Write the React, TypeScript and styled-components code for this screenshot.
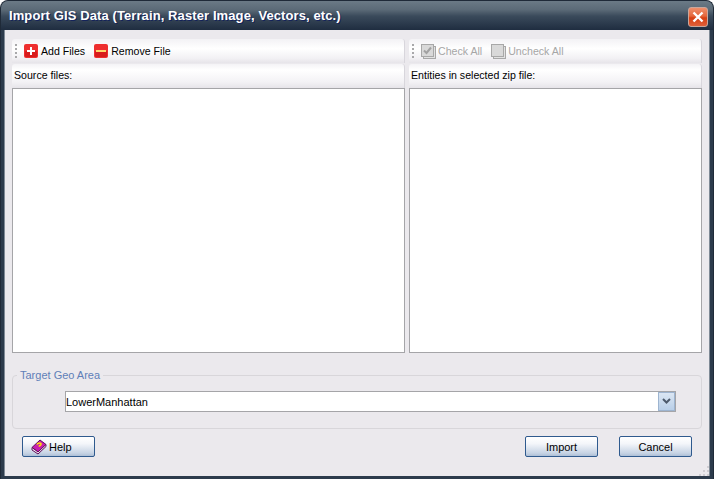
import React from 'react';
import styled, { createGlobalStyle } from 'styled-components';

const GlobalStyle = createGlobalStyle`
  html, body {
    margin: 0;
    padding: 0;
    background: #ffffff;
    overflow: hidden;
  }
  * {
    box-sizing: border-box;
  }
`;

const Window = styled.div`
  width: 714px;
  height: 479px;
  display: flex;
  flex-direction: column;
  background: #2c3b4c;
  border: 1px solid #1f2a38;
  border-bottom: 0;
  border-radius: 8px 8px 0 0;
  padding: 0 3px 3px;
  font-family: "Liberation Sans", Arial, sans-serif;
  font-size: 11px;
  color: #000;
`;

const TitleBar = styled.div`
  flex: none;
  height: 29px;
  margin: 0 -3px;
  padding: 0 5px 0 8px;
  border-radius: 7px 7px 0 0;
  display: flex;
  align-items: center;
  justify-content: space-between;
  background: linear-gradient(#6b7a86 0, #5b6a77 30%, #3a4a5b 52%, #1f2d40 100%);
`;

const Title = styled.span`
  font-family: "Liberation Sans", Arial, sans-serif;
  font-weight: bold;
  font-size: 13px;
  letter-spacing: 0.1px;
  color: #fff;
  text-shadow: 1px 1px 0 #14235a;
`;

const CloseButton = styled.div`
  width: 20px;
  height: 20px;
  margin-top: 3px;
  border-radius: 3px;
  border: 1px solid #c9a79c;
  background: linear-gradient(#ee8f6c 0, #e5673c 45%, #d63f12 55%, #e0603a 100%);
  display: flex;
  align-items: center;
  justify-content: center;
`;

const Body = styled.div`
  flex: 1;
  display: flex;
  flex-direction: column;
  position: relative;
  background: #ebe9ed;
  padding: 9px 7px 0;
  border-left: 1px solid #7f8a96;
  border-right: 1px solid #7f8a96;
`;

const Panels = styled.div`
  display: flex;
  gap: 4px;
  height: 314px;
`;

const Panel = styled.div<{ $width: number }>`
  width: ${(p) => p.$width}px;
  display: flex;
  flex-direction: column;
`;

const Toolbar = styled.div`
  flex: none;
  height: 24px;
  margin-bottom: 1px;
  display: flex;
  align-items: center;
  gap: 9px;
  padding-left: 3px;
  font-size: 10.6px;
  border-radius: 3px 3px 0 0;
  border-right: 1px solid #d8d6dc;
  background: linear-gradient(#f3f2f5 0, #ffffff 40%, #f2f1f4 80%, #e6e4e9 100%);
`;

const Grip = styled.span`
  width: 2px;
  height: 14px;
  margin-right: -2px;
  background: repeating-linear-gradient(#a8a8aa 0, #a8a8aa 2px, transparent 2px, transparent 4px);
`;

const ToolItem = styled.span<{ $disabled?: boolean }>`
  display: flex;
  align-items: center;
  gap: ${(p) => (p.$disabled ? '2px' : '3px')};
  color: ${(p) => (p.$disabled ? '#a6a6a6' : '#000')};
`;

const PanelHeader = styled.div`
  flex: none;
  height: 24px;
  padding: 0 2px 2px;
  display: flex;
  align-items: center;
  font-size: 10.6px;
  border-radius: 3px 3px 0 0;
  border-right: 1px solid #d8d6dc;
  background: linear-gradient(#f4f3f6 0, #ffffff 25%, #f3f2f5 75%, #e6e4e9 100%);
`;

const ListBox = styled.div`
  flex: 1;
  background: #fff;
  border: 1px solid #a5a5a8;
`;

const GeoGroup = styled.fieldset`
  margin: 16px 0 0;
  padding: 0 25px 0 52px;
  height: 60px;
  border: 1px solid #d8d6da;
  border-radius: 4px;
  min-width: 0;
`;

const GeoLegend = styled.legend`
  padding: 0 3px;
  margin-left: -48px;
  color: #5f7fb8;
  line-height: 13px;
`;

const Combo = styled.div`
  height: 21px;
  margin-top: 9px;
  display: flex;
  align-items: center;
  justify-content: space-between;
  background: #fff;
  border: 1px solid #a5a5a8;
`;

const ComboArrow = styled.span`
  width: 17px;
  height: 19px;
  display: flex;
  align-items: center;
  justify-content: center;
  background: linear-gradient(#dbe6f3, #b9cfe8);
  border: 1px solid #9db4d0;
`;

const ButtonRow = styled.div`
  display: flex;
  justify-content: space-between;
  align-items: center;
  margin-top: 7px;
  padding: 0 10px;
`;

const ButtonGroup = styled.div`
  display: flex;
  gap: 21px;
`;

const DialogButton = styled.div<{ $left?: boolean }>`
  width: 73px;
  height: 21px;
  display: flex;
  align-items: center;
  justify-content: ${(p) => (p.$left ? 'flex-start' : 'center')};
  gap: 2px;
  padding-left: ${(p) => (p.$left ? '8px' : '0')};
  border: 1px solid #2f5a8e;
  border-radius: 2px;
  background: linear-gradient(#ffffff 0, #f4f6fa 35%, #c6d3e4 85%, #aebfd6 100%);
`;

const ResizeGrip = styled.svg`
  position: absolute;
  right: 0;
  bottom: 0;
`;

const PlusIcon = () => (
  <svg width="14" height="14" viewBox="0 0 14 14">
    <rect x="0" y="0" width="14" height="14" rx="2" fill="#ee2f2f" />
    <rect x="1" y="7" width="12" height="6" rx="1" fill="#d81c1c" />
    <path d="M6 3h2v3h3v2H8v3H6V8H3V6h3z" fill="#fff" />
  </svg>
);

const MinusIcon = () => (
  <svg width="14" height="14" viewBox="0 0 14 14">
    <rect x="0" y="0" width="14" height="14" rx="2" fill="#ee2f2f" />
    <rect x="1" y="7" width="12" height="6" rx="1" fill="#d81c1c" />
    <rect x="2" y="6" width="10" height="2" fill="#ffd76a" />
  </svg>
);

const CheckAllIcon = ({ checked }: { checked?: boolean }) => (
  <svg width="15" height="15" viewBox="0 0 15 15">
    <rect x="2.5" y="2.5" width="12" height="12" fill="#e2e2e2" stroke="#a8a8a8" />
    <rect x="0.5" y="0.5" width="12" height="12" fill="#d9d9d9" stroke="#a8a8a8" />
    {checked && <path d="M3 6.5l2.5 2.5L10 3.5" fill="none" stroke="#a2a2a2" strokeWidth="2" />}
  </svg>
);

const HelpIcon = () => (
  <svg width="16" height="16" viewBox="0 0 16 16">
    <path d="M1 8.5L9 1l6 4.5-8 7.5z" fill="#c81fb0" stroke="#5c0d58" />
    <path d="M1 8.5V11l6 4 8-7.5v-2L7 13z" fill="#f7e8f4" stroke="#5c0d58" />
    <path d="M6 5.5c1-2 4.5-2 4 0-.3 1-1.8 1-2 2" fill="none" stroke="#ffe800" strokeWidth="1.5" />
  </svg>
);

export default function App() {
  return (
    <>
      <GlobalStyle />
      <Window>
        <TitleBar>
          <Title>Import GIS Data (Terrain, Raster Image, Vectors, etc.)</Title>
          <CloseButton>
            <svg width="12" height="12" viewBox="0 0 12 12">
              <path d="M1.5 1.5l9 9M10.5 1.5l-9 9" stroke="#fff" strokeWidth="2.4" />
            </svg>
          </CloseButton>
        </TitleBar>
        <Body>
          <Panels>
            <Panel $width={393}>
              <Toolbar>
                <Grip />
                <ToolItem><PlusIcon />Add Files</ToolItem>
                <ToolItem><MinusIcon />Remove File</ToolItem>
              </Toolbar>
              <PanelHeader>Source files:</PanelHeader>
              <ListBox />
            </Panel>
            <Panel $width={293}>
              <Toolbar>
                <Grip />
                <ToolItem $disabled><CheckAllIcon checked />Check All</ToolItem>
                <ToolItem $disabled><CheckAllIcon />Uncheck All</ToolItem>
              </Toolbar>
              <PanelHeader>Entities in selected zip file:</PanelHeader>
              <ListBox />
            </Panel>
          </Panels>
          <GeoGroup>
            <GeoLegend>Target Geo Area</GeoLegend>
            <Combo>
              LowerManhattan
              <ComboArrow>
                <svg width="9" height="7" viewBox="0 0 9 7">
                  <path d="M1 1l3.5 3.5L8 1" fill="none" stroke="#4d5a6c" strokeWidth="2" />
                </svg>
              </ComboArrow>
            </Combo>
          </GeoGroup>
          <ButtonRow>
            <DialogButton $left><HelpIcon />Help</DialogButton>
            <ButtonGroup>
              <DialogButton>Import</DialogButton>
              <DialogButton>Cancel</DialogButton>
            </ButtonGroup>
          </ButtonRow>
          <ResizeGrip width="10" height="10" viewBox="0 0 10 10">
            <path d="M8 0h2v2H8zM4 4h2v2H4zM8 4h2v2H8zM0 8h2v2H0zM4 8h2v2H4zM8 8h2v2H8z" fill="#cfcdd2" />
          </ResizeGrip>
        </Body>
      </Window>
    </>
  );
}
